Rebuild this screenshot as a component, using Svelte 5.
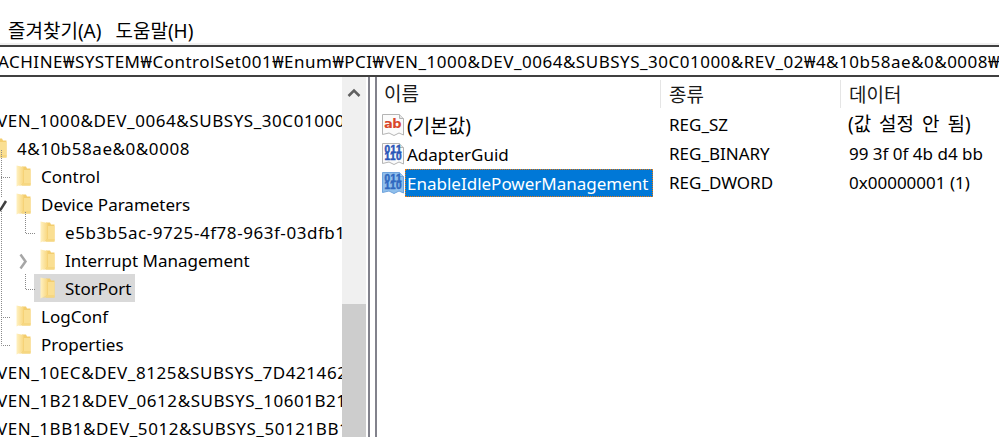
<script>
	const treeRows = [
		{ label: 'VEN_1000&DEV_0064&SUBSYS_30C01000&REV_02', x: -28 },
		{ label: '4&10b58ae&0&0008', x: -8 },
		{ label: 'Control', x: 16 },
		{ label: 'Device Parameters', x: 16 },
		{ label: 'e5b3b5ac-9725-4f78-963f-03dfb1a4c0de', x: 40 },
		{ label: 'Interrupt Management', x: 40 },
		{ label: 'StorPort', x: 40, selected: true },
		{ label: 'LogConf', x: 16 },
		{ label: 'Properties', x: 16 },
		{ label: 'VEN_10EC&DEV_8125&SUBSYS_7D421462&REV_05', x: -28 },
		{ label: 'VEN_1B21&DEV_0612&SUBSYS_10601B21&REV_01', x: -28 },
		{ label: 'VEN_1BB1&DEV_5012&SUBSYS_50121BB1&REV_01', x: -28 }
	];

	const values = [
		{ name: '(기본값)', type: 'REG_SZ', data: '(값 설정 안 됨)', icon: 'ab', korean: true },
		{ name: 'AdapterGuid', type: 'REG_BINARY', data: '99 3f 0f 4b d4 bb', icon: 'bin' },
		{ name: 'EnableIdlePowerManagement', type: 'REG_DWORD', data: '0x00000001 (1)', icon: 'bin', selected: true }
	];
</script>

<div class="window">
	<div class="menu">
		<span>즐겨찾기(A)</span>
		<span>도움말(H)</span>
	</div>
	<div class="address">
		<span>ACHINE₩SYSTEM₩ControlSet001₩Enum₩PCI₩VEN_1000&DEV_0064&SUBSYS_30C01000&REV_02₩4&10b58ae&0&0008₩</span>
	</div>

	<div class="panes">
		<div class="tree">
			{#each treeRows as row}
				<div class="tree-row">
					<div class="node" class:selected={row.selected} class:code={/\d/.test(row.label)} style="margin-left: {row.x - (row.selected ? 6 : 0)}px">
						<svg class="folder" width="15" height="22" viewBox="0 0 15 22">
							<defs>
								<linearGradient id="flap" x1="0" x2="1" y1="0" y2="0">
									<stop offset="0" stop-color="#fff1c2" />
									<stop offset="1" stop-color="#f8d77f" />
								</linearGradient>
							</defs>
							<path d="M6 1.500h4l1 2h3.500v17H6z" fill="#f3cd6e" />
							<path d="M8 5h6.500v14H8z" fill="#fadf92" />
							<path d="M0.500 0.500L7.500 2V18L0.500 21.500z" fill="url(#flap)" />
							<path d="M7.500 18H14.500V20.500H2.500z" fill="#f6d781" />
						</svg>
						<span>{row.label}</span>
					</div>
				</div>
			{/each}
			<svg class="connectors" width="342" height="360" viewBox="0 0 342 360">
				<g stroke="#8a8a8a" stroke-dasharray="1 1" fill="none">
					<path d="M1.500 73V120" />
					<path d="M1.500 134V268.500H11" />
					<path d="M1 100.500H11" />
					<path d="M1 240.500H11" />
					<path d="M25.500 135V156.500H35" />
					<path d="M25.500 197V212.500H35" />
				</g>
				<path d="M20.500 177.500L25.500 184.500L20.500 191.500" fill="none" stroke="#a6a6a6" stroke-width="2.500" />
				<path d="M-1 134L1 132L6 124" fill="none" stroke="#404040" stroke-width="2.500" />
			</svg>
		</div>
		<div class="scrollbar">
			<div class="scroll-track">
				<svg width="14" height="10" viewBox="0 0 14 10">
					<path d="M1.500 8L7 2.500L12.500 8" fill="none" stroke="#606060" stroke-width="2.500" />
				</svg>
			</div>
			<div class="scroll-thumb"></div>
		</div>
		<div class="splitter"></div>

		<div class="list">
			<div class="list-head">
				<div class="col-name">이름</div>
				<div class="col-type">종류</div>
				<div class="col-data">데이터</div>
			</div>
			{#each values as value}
				<div class="list-row">
					<div class="col-name">
						<svg class="value-icon" class:active={value.selected} width="24" height="24" viewBox="0 0 24 24">
							<path class="sheet" d="M1.500 1.500H18.500L22.500 5.500V22L18 20L13 22.500L8 20L1.500 21.500z" />
							<path class="corner" d="M18.500 1.500V5.500H22.500" />
							{#if value.icon === 'ab'}
								<text x="3" y="15" class="glyph-ab">ab</text>
							{:else}
								<text x="3.500" y="10.500" class="glyph-bin">011</text>
								<text x="3.500" y="18" class="glyph-bin">110</text>
							{/if}
						</svg>
						<span class="value-name" class:selected={value.selected} class:korean={value.korean}>{value.name}</span>
					</div>
					<div class="col-type">{value.type}</div>
					<div class="col-data" class:korean={value.korean}>{value.data}</div>
				</div>
			{/each}
		</div>
	</div>
</div>

<style>
	:global(body) {
		margin: 0;
		background: #fff;
	}

	.window {
		width: 999px;
		height: 437px;
		overflow: hidden;
		display: flex;
		flex-direction: column;
		font-family: "Noto Sans", "Noto Sans CJK KR", sans-serif;
		font-size: 17px;
		color: #000;
	}

	.menu {
		height: 45px;
		box-sizing: border-box;
		padding: 18px 0 0 8px;
		display: flex;
		gap: 14px;
		line-height: 26px;
		font-size: 19px;
		border-bottom: 2px solid #f0f0f0;
		flex: none;
	}

	.address {
		height: 28px;
		line-height: 29px;
		letter-spacing: 0.5px;
		border-top: 2px solid #404040;
		border-bottom: 2px solid #404040;
		white-space: nowrap;
		overflow: hidden;
		flex: none;
	}

	.address span {
		margin-left: -2px;
		display: inline-block;
	}

	.panes {
		flex: 1;
		display: flex;
		min-height: 0;
	}

	.tree {
		position: relative;
		width: 342px;
		flex: none;
		overflow: hidden;
		padding-top: 29px;
		box-sizing: border-box;
	}

	.tree-row {
		height: 28px;
		white-space: nowrap;
	}

	.node {
		display: inline-flex;
		align-items: center;
		gap: 10px;
		height: 28px;
		line-height: 29px;
		padding-right: 3px;
	}

	.node.code {
		letter-spacing: 0.55px;
	}

	.node.selected {
		background: #d9d9d9;
		padding-left: 6px;
	}

	.folder {
		flex: none;
	}

	.connectors {
		position: absolute;
		left: 0;
		top: 0;
		pointer-events: none;
		overflow: visible;
	}

	.scrollbar {
		width: 24px;
		flex: none;
		display: flex;
		flex-direction: column;
		background: #f0f0f0;
	}

	.scroll-track {
		height: 227px;
		display: flex;
		justify-content: center;
		padding-top: 11px;
		box-sizing: border-box;
	}

	.scroll-thumb {
		flex: 1;
		background: #cdcdcd;
	}

	.splitter {
		width: 5px;
		margin-left: 2px;
		flex: none;
		border-left: 2px solid #82828c;
		border-right: 2px solid #82828c;
	}

	.list {
		flex: 1;
		min-width: 0;
		overflow: hidden;
		padding-left: 4px;
	}

	.list-head,
	.list-row {
		display: flex;
		white-space: nowrap;
	}

	.list-head {
		height: 33px;
		color: #1a1a1a;
		font-size: 19px;
	}

	.list-row {
		height: 29px;
		line-height: 29px;
	}

	.col-name {
		width: 280px;
		flex: none;
		display: flex;
		align-items: center;
		box-sizing: border-box;
	}

	.col-type,
	.col-data {
		padding-left: 8px;
		box-sizing: border-box;
	}

	.col-type {
		width: 180px;
		flex: none;
	}

	.col-data {
		flex: 1;
	}

	.col-data.korean {
		font-size: 19px;
		word-spacing: 3px;
		padding-left: 7px;
	}

	.list-head > div {
		height: 28px;
		line-height: 30px;
		margin-top: 3px;
	}

	.list-head .col-name {
		padding-left: 3px;
		border-right: 1px solid #e5e5e5;
	}

	.list-head .col-type {
		border-right: 1px solid #e5e5e5;
	}

	.value-icon {
		flex: none;
	}

	.sheet {
		fill: #fbfbfb;
		stroke: #b4b4b4;
	}

	.corner {
		fill: #e4e4e4;
		stroke: #b4b4b4;
	}

	.active .sheet {
		fill: #8fbfec;
		stroke: #6fa3dc;
	}

	.active .corner {
		fill: #a9cff2;
		stroke: #6fa3dc;
	}

	.glyph-ab {
		font-family: "DejaVu Sans", sans-serif;
		font-size: 13px;
		font-weight: 700;
		letter-spacing: -0.500px;
		fill: #d9472b;
	}

	.glyph-bin {
		font-family: "Liberation Sans", sans-serif;
		font-size: 10px;
		font-weight: 700;
		letter-spacing: 0.500px;
		fill: #2a55b8;
		stroke: #2a55b8;
		stroke-width: 0.5px;
	}

	.active .glyph-bin {
		fill: #2f68c0;
		stroke: #2f68c0;
	}

	.value-name {
		padding: 0 2px;
		height: 28px;
		line-height: 30px;
		box-sizing: border-box;
	}

	.value-name.korean {
		font-size: 19px;
		padding-left: 2px;
	}

	.value-name.selected {
		background: #0078d7;
		color: #fff;
		padding-right: 4px;
		outline: 1px dotted #e87a10;
		outline-offset: -1px;
	}
</style>
